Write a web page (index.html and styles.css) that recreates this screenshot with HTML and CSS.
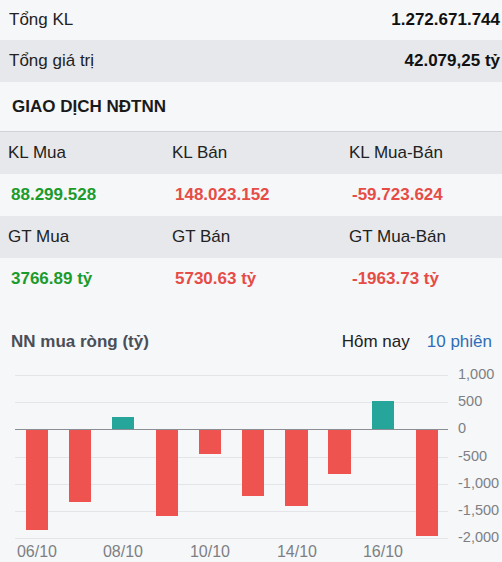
FILE: index.html
```html
<!DOCTYPE html>
<html lang="vi">
<head>
    <meta charset="UTF-8">
    <meta name="viewport" content="width=device-width, initial-scale=1.0">
    <title>Giao dịch NĐTNN</title>
    <link rel="stylesheet" href="styles.css">
</head>
<body>
    <div class="panel">
        <!-- Tổng quan phiên -->
        <div class="sum-row">
            <span>Tổng KL</span>
            <b>1.272.671.744</b>
        </div>
        <div class="sum-row striped">
            <span>Tổng giá trị</span>
            <b>42.079,25 tỷ</b>
        </div>

        <h3 class="section-title">GIAO DỊCH NĐTNN</h3>

        <div class="trade-grid">
            <div class="cell head">KL Mua</div>
            <div class="cell head">KL Bán</div>
            <div class="cell head">KL Mua-Bán</div>

            <div class="cell val up">88.299.528</div>
            <div class="cell val down">148.023.152</div>
            <div class="cell val down">-59.723.624</div>

            <div class="cell head">GT Mua</div>
            <div class="cell head">GT Bán</div>
            <div class="cell head">GT Mua-Bán</div>

            <div class="cell val up">3766.89 tỷ</div>
            <div class="cell val down">5730.63 tỷ</div>
            <div class="cell val down">-1963.73 tỷ</div>
        </div>

        <div class="chart-head">
            <span class="chart-title">NN mua ròng (tỷ)</span>
            <div class="tabs">
                <span class="tab">Hôm nay</span>
                <span class="tab active">10 phiên</span>
            </div>
        </div>

        <svg class="chart" width="502" height="202" viewBox="0 0 502 202">
            <g class="grid">
                <line x1="15" y1="15.5" x2="448" y2="15.5"/>
                <line x1="15" y1="42.5" x2="448" y2="42.5"/>
                <line x1="15" y1="97.5" x2="448" y2="97.5"/>
                <line x1="15" y1="124.5" x2="448" y2="124.5"/>
                <line x1="15" y1="151.5" x2="448" y2="151.5"/>
                <line x1="15" y1="178.5" x2="448" y2="178.5"/>
            </g>

            <g class="bars">
                <rect class="neg" x="26" y="70" width="22" height="100"/>
                <rect class="neg" x="69" y="70" width="22" height="72"/>
                <rect class="pos" x="112" y="57" width="22" height="13"/>
                <rect class="neg" x="156" y="70" width="22" height="86"/>
                <rect class="neg" x="199" y="70" width="22" height="24"/>
                <rect class="neg" x="242" y="70" width="22" height="66"/>
                <rect class="neg" x="285" y="70" width="23" height="76"/>
                <rect class="neg" x="328" y="70" width="23" height="44"/>
                <rect class="pos" x="372" y="41" width="22" height="29"/>
                <rect class="neg" x="416" y="70" width="22" height="106"/>
            </g>

            <line class="zero" x1="15" y1="69.5" x2="448" y2="69.5"/>

            <g class="y-axis">
                <text x="458" y="15">1,000</text>
                <text x="458" y="42">500</text>
                <text x="458" y="69">0</text>
                <text x="458" y="97">-500</text>
                <text x="458" y="124">-1,000</text>
                <text x="458" y="151">-1,500</text>
                <text x="458" y="178">-2,000</text>
            </g>

            <g class="x-axis">
                <text x="37" y="193">06/10</text>
                <text x="123" y="193">08/10</text>
                <text x="210" y="193">10/10</text>
                <text x="297" y="193">14/10</text>
                <text x="383" y="193">16/10</text>
            </g>
        </svg>
    </div>
</body>
</html>
```

FILE: styles.css
```css
/* Khung chung */
body {
    margin: 0;
    background-color: #f6f7f9;
    font-family: 'Liberation Sans', Arial, sans-serif;
    font-size: 17px;
    color: #222;
    overflow: hidden;
}

.panel {
    width: 502px;
}

/* Tổng KL / Tổng giá trị */
.sum-row {
    display: flex;
    justify-content: space-between;
    align-items: center;
    height: 40px;
    padding: 0 2px 0 9px;
}

.sum-row.striped {
    height: 42px;
    background-color: #e6e8ec;
}

.sum-row b {
    color: #111;
}

.section-title {
    margin: 0;
    height: 49px;
    line-height: 50px;
    padding-left: 12px;
    font-size: 17px;
    font-weight: bold;
    color: #1a1a1a;
    border-bottom: 1px solid #cfd2d7;
}

/* Bảng mua bán */
.trade-grid {
    display: grid;
    grid-template-columns: 164px 177px 1fr;
    grid-auto-rows: 42px;
}

.cell {
    display: flex;
    align-items: center;
    padding-left: 8px;
}

.cell.head {
    background-color: #e6e8ec;
    color: #222;
}

.cell.val {
    padding-left: 11px;
    font-weight: bold;
}

.up {
    color: #1c9b2b;
}

.down {
    color: #e64c46;
}

/* Biểu đồ */
.chart-head {
    display: flex;
    justify-content: space-between;
    align-items: center;
    height: 24px;
    margin-top: 30px;
    padding: 0 10px 0 11px;
    margin-bottom: 6px;
}

.chart-title {
    font-weight: bold;
    color: #4a4f57;
}

.tabs {
    display: flex;
    gap: 17px;
}

.tab {
    color: #222;
}

.tab.active {
    color: #2e6db5;
}

.chart {
    display: block;
}

.grid line {
    stroke: #e3e5e9;
    stroke-width: 1;
}

.zero {
    stroke: #8a8d93;
    stroke-width: 1;
}

.bars .neg {
    fill: #ef5350;
}

.bars .pos {
    fill: #26a69a;
}

.y-axis text,
.x-axis text {
    font-family: 'Liberation Sans', Arial, sans-serif;
    fill: #7d7f84;
    dominant-baseline: middle;
}

.y-axis text {
    font-size: 14.5px;
}

.x-axis text {
    font-size: 16px;
    text-anchor: middle;
}
```
